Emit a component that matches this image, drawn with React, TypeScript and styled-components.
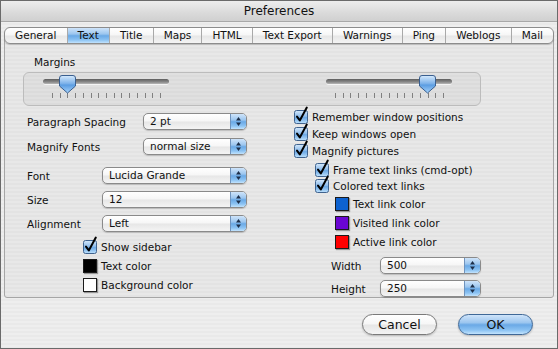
import React from 'react';
import styled, { createGlobalStyle } from 'styled-components';

const GlobalStyle = createGlobalStyle`
  html, body {
    margin: 0;
    padding: 0;
    background: #ffffff;
  }
  body {
    font-family: "DejaVu Sans", "Liberation Sans", sans-serif;
    font-size: 10.5px;
    color: #111;
  }
`;

const aquaBlue = `linear-gradient(#cfe4fa 0%, #9cc6ef 40%, #6aa9e6 52%, #8cc3f3 80%, #c2e3fd 100%)`;
const aquaWhite = `linear-gradient(#ffffff 0%, #f6f6f6 48%, #e6e6e6 52%, #f4f4f4 100%)`;

const Window = styled.div`
  width: 558px;
  height: 349px;
  box-sizing: border-box;
  border: 1px solid #6a6a6a;
  display: flex;
  flex-direction: column;
  background: repeating-linear-gradient(to bottom, #eeeeee 0 2px, #e9e9e9 2px 4px);
  overflow: hidden;
`;

const TitleBar = styled.div`
  height: 20px;
  flex-shrink: 0;
  display: flex;
  align-items: center;
  justify-content: center;
  font-size: 12px;
  background: linear-gradient(#ededed, #dadada 60%, #d0d0d0);
  border-bottom: 1px solid #a8a8a8;
`;

const Content = styled.div`
  padding: 0 3px;
  display: flex;
  flex-direction: column;
`;

const TabBar = styled.div`
  position: relative;
  z-index: 1;
  margin-top: 5px;
  height: 17px;
  box-sizing: border-box;
  display: flex;
  border: 1px solid #8c8c8c;
  border-radius: 6px;
  overflow: hidden;
  background: ${aquaWhite};
  box-shadow: 0 1px 1px rgba(0, 0, 0, 0.18);
`;

const Tab = styled.div<{ $active?: boolean }>`
  flex: 1 1 auto;
  display: flex;
  align-items: center;
  justify-content: center;
  padding: 0 9px;
  white-space: nowrap;
  line-height: 15px;
  border-left: 1px solid #a9a9a9;
  background: ${(p) => (p.$active ? aquaBlue : 'transparent')};
  &:first-child {
    border-left: none;
  }
`;

const Panel = styled.div`
  margin-top: -8px;
  height: 262px;
  box-sizing: border-box;
  border: 1px solid #a6a6a6;
  border-radius: 3px;
  background: rgba(0, 0, 0, 0.025);
  padding-top: 19px;
  display: flex;
  flex-direction: column;
`;

const SectionLabel = styled.div`
  margin-left: 29px;
  line-height: 13px;
`;

const SliderGroup = styled.div`
  margin: 3px 0 0 18px;
  width: 458px;
  height: 34px;
  box-sizing: border-box;
  border: 1px solid #bcbcbc;
  border-radius: 6px;
  background: rgba(0, 0, 0, 0.03);
  display: flex;
  justify-content: space-between;
  padding: 0 28px 0 19px;
`;

const Slider = styled.div`
  position: relative;
  width: 126px;
  padding-top: 6px;
`;

const Track = styled.div`
  height: 5px;
  border-radius: 3px;
  background: linear-gradient(#5e5e5e, #8a8a8a 60%, #b8b8b8);
  box-shadow: 0 1px 0 rgba(255, 255, 255, 0.7);
`;

const Ticks = styled.div`
  position: relative;
  margin-top: 9px;
  height: 5px;
`;

const Tick = styled.span`
  position: absolute;
  top: 0;
  width: 1px;
  height: 5px;
  background: #808080;
`;

const Thumb = styled.svg`
  position: absolute;
  top: 2px;
`;

const Columns = styled.div`
  margin-top: 2px;
  display: flex;
`;

const LeftColumn = styled.div`
  width: 289px;
  box-sizing: border-box;
  padding-left: 22px;
  display: flex;
  flex-direction: column;
`;

const RightColumn = styled.div`
  display: flex;
  flex-direction: column;
`;

const Spacer = styled.div<{ $h: number }>`
  height: ${(p) => p.$h}px;
`;

const FieldRow = styled.div<{ $gap: number; $indent?: number }>`
  display: flex;
  align-items: center;
  margin-top: ${(p) => p.$gap}px;
  padding-left: ${(p) => p.$indent ?? 0}px;
`;

const FieldLabel = styled.div<{ $w: number }>`
  width: ${(p) => p.$w}px;
  flex-shrink: 0;
`;

const PopUp = styled.div<{ $w: number }>`
  width: ${(p) => p.$w}px;
  height: 17px;
  box-sizing: border-box;
  display: flex;
  border: 1px solid #8a8a8a;
  border-radius: 5px;
  overflow: hidden;
  background: ${aquaWhite};
  box-shadow: 0 1px 1px rgba(0, 0, 0, 0.18);
`;

const PopUpValue = styled.div`
  flex: 1;
  padding-left: 6px;
  line-height: 15px;
`;

const PopUpArrows = styled.div`
  width: 15px;
  display: flex;
  align-items: center;
  justify-content: center;
  border-left: 1px solid #6f93bd;
  background: ${aquaBlue};
`;

const CheckRow = styled.div<{ $indent: number; $h: number }>`
  display: flex;
  align-items: center;
  gap: 4px;
  height: ${(p) => p.$h}px;
  padding-left: ${(p) => p.$indent}px;
`;

const Box = styled.div`
  position: relative;
  width: 14px;
  height: 14px;
  flex-shrink: 0;
`;

const CheckMark = styled.svg`
  position: absolute;
  left: 0;
  top: -4px;
  overflow: visible;
`;

const Swatch = styled.div<{ $color: string }>`
  width: 14px;
  height: 14px;
  box-sizing: border-box;
  flex-shrink: 0;
  border: 1px solid #1a1a1a;
  background: ${(p) => p.$color};
  box-shadow: 1px 1px 1px rgba(0, 0, 0, 0.35);
`;

const Footer = styled.div`
  margin-top: 16px;
  display: flex;
  justify-content: flex-end;
  gap: 21px;
  padding-right: 24px;
`;

const PushButton = styled.div<{ $primary?: boolean }>`
  width: 75px;
  height: 21px;
  box-sizing: border-box;
  border-radius: 11px;
  display: flex;
  align-items: center;
  justify-content: center;
  font-size: 12.5px;
  border: 1px solid ${(p) => (p.$primary ? '#3f6897' : '#7a7a7a')};
  background: ${(p) => (p.$primary ? aquaBlue : aquaWhite)};
  box-shadow: 0 1px 2px rgba(0, 0, 0, 0.22);
`;

function Arrows() {
  return (
    <svg width="7" height="11" viewBox="0 0 7 11">
      <path d="M3.5 1 L6 4.5 H1 Z" fill="#1d2f4a" />
      <path d="M3.5 10 L6 6.5 H1 Z" fill="#1d2f4a" />
    </svg>
  );
}

function Select({ value, width }: { value: string; width: number }) {
  return (
    <PopUp $w={width}>
      <PopUpValue>{value}</PopUpValue>
      <PopUpArrows>
        <Arrows />
      </PopUpArrows>
    </PopUp>
  );
}

function Checkbox() {
  return (
    <Box>
      <CheckMark width="16" height="18" viewBox="0 0 16 18">
        <defs>
          <linearGradient id="cbFill" x1="0" y1="0" x2="0" y2="1">
            <stop offset="0" stopColor="#d6e9fb" />
            <stop offset="0.45" stopColor="#8fbdec" />
            <stop offset="0.55" stopColor="#6ba8e5" />
            <stop offset="1" stopColor="#bfe2fd" />
          </linearGradient>
        </defs>
        <rect x="0.5" y="4.5" width="13" height="13" rx="2" fill="url(#cbFill)" stroke="#40638e" />
        <path d="M3 10.6 L5.8 14.4 L12.8 1.6" fill="none" stroke="#000" strokeWidth="2" strokeLinecap="round" strokeLinejoin="round" />
      </CheckMark>
    </Box>
  );
}

const TICKS = 15;

function MarginSlider({ value }: { value: number }) {
  const step = 108 / (TICKS - 1);
  const center = 9 + value * step;
  return (
    <Slider>
      <Track />
      <Ticks>
        {Array.from({ length: TICKS }).map((_, i) => (
          <Tick key={i} style={{ left: Math.round(9 + i * step) }} />
        ))}
      </Ticks>
      <Thumb width="17" height="19" viewBox="0 0 17 19" style={{ left: center - 8.5 }}>
        <defs>
          <linearGradient id="thumbFill" x1="0" y1="0" x2="0" y2="1">
            <stop offset="0" stopColor="#d7ebfd" />
            <stop offset="0.45" stopColor="#7fb3ea" />
            <stop offset="0.55" stopColor="#5b9de2" />
            <stop offset="1" stopColor="#a7d3fb" />
          </linearGradient>
        </defs>
        <path
          d="M3 0.5 H14 Q16.5 0.5 16.5 3 V11 L8.5 18 L0.5 11 V3 Q0.5 0.5 3 0.5 Z"
          fill="url(#thumbFill)"
          stroke="#3a5f8f"
        />
      </Thumb>
    </Slider>
  );
}

const tabs = ['General', 'Text', 'Title', 'Maps', 'HTML', 'Text Export', 'Warnings', 'Ping', 'Weblogs', 'Mail'];

export default function App() {
  return (
    <>
      <GlobalStyle />
      <Window>
        <TitleBar>Preferences</TitleBar>
        <Content>
          <TabBar>
            {tabs.map((t) => (
              <Tab key={t} $active={t === 'Text'}>
                {t}
              </Tab>
            ))}
          </TabBar>
          <Panel>
            <SectionLabel>Margins</SectionLabel>
            <SliderGroup>
              <MarginSlider value={2} />
              <MarginSlider value={12} />
            </SliderGroup>
            <Columns>
              <LeftColumn>
                <FieldRow $gap={5}>
                  <FieldLabel $w={116}>Paragraph Spacing</FieldLabel>
                  <Select value="2 pt" width={104} />
                </FieldRow>
                <FieldRow $gap={8}>
                  <FieldLabel $w={116}>Magnify Fonts</FieldLabel>
                  <Select value="normal size" width={104} />
                </FieldRow>
                <FieldRow $gap={12}>
                  <FieldLabel $w={75}>Font</FieldLabel>
                  <Select value="Lucida Grande" width={145} />
                </FieldRow>
                <FieldRow $gap={7}>
                  <FieldLabel $w={75}>Size</FieldLabel>
                  <Select value="12" width={145} />
                </FieldRow>
                <FieldRow $gap={7}>
                  <FieldLabel $w={75}>Alignment</FieldLabel>
                  <Select value="Left" width={145} />
                </FieldRow>
                <Spacer $h={5} />
                <CheckRow $indent={56} $h={19}>
                  <Checkbox />
                  Show sidebar
                </CheckRow>
                <CheckRow $indent={56} $h={19}>
                  <Swatch $color="#000000" />
                  Text color
                </CheckRow>
                <CheckRow $indent={56} $h={19}>
                  <Swatch $color="#ffffff" />
                  Background color
                </CheckRow>
              </LeftColumn>
              <RightColumn>
                <CheckRow $indent={0} $h={17}>
                  <Checkbox />
                  Remember window positions
                </CheckRow>
                <CheckRow $indent={0} $h={17}>
                  <Checkbox />
                  Keep windows open
                </CheckRow>
                <CheckRow $indent={0} $h={17}>
                  <Checkbox />
                  Magnify pictures
                </CheckRow>
                <Spacer $h={3} />
                <CheckRow $indent={21} $h={16}>
                  <Checkbox />
                  Frame text links (cmd-opt)
                </CheckRow>
                <CheckRow $indent={21} $h={16}>
                  <Checkbox />
                  Colored text links
                </CheckRow>
                <CheckRow $indent={41} $h={19}>
                  <Swatch $color="#0d62d0" />
                  Text link color
                </CheckRow>
                <CheckRow $indent={41} $h={19}>
                  <Swatch $color="#6a06d2" />
                  Visited link color
                </CheckRow>
                <CheckRow $indent={41} $h={19}>
                  <Swatch $color="#ff0000" />
                  Active link color
                </CheckRow>
                <FieldRow $gap={6} $indent={37}>
                  <FieldLabel $w={49}>Width</FieldLabel>
                  <Select value="500" width={101} />
                </FieldRow>
                <FieldRow $gap={6} $indent={37}>
                  <FieldLabel $w={49}>Height</FieldLabel>
                  <Select value="250" width={101} />
                </FieldRow>
              </RightColumn>
            </Columns>
          </Panel>
        </Content>
        <Footer>
          <PushButton>Cancel</PushButton>
          <PushButton $primary>OK</PushButton>
        </Footer>
      </Window>
    </>
  );
}
